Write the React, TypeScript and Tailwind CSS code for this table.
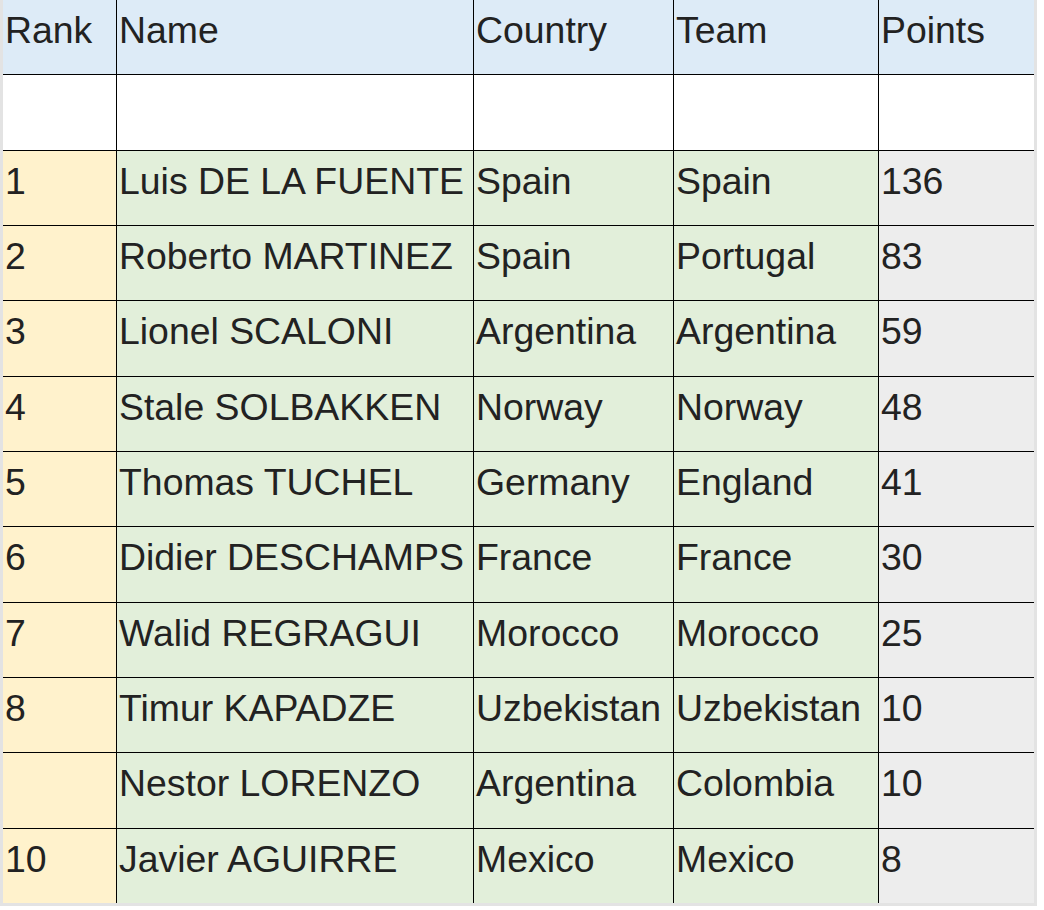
import React from "react";

const rows: [string, string, string, string, string][] = [
  ["1", "Luis DE LA FUENTE", "Spain", "Spain", "136"],
  ["2", "Roberto MARTINEZ", "Spain", "Portugal", "83"],
  ["3", "Lionel SCALONI", "Argentina", "Argentina", "59"],
  ["4", "Stale SOLBAKKEN", "Norway", "Norway", "48"],
  ["5", "Thomas TUCHEL", "Germany", "England", "41"],
  ["6", "Didier DESCHAMPS", "France", "France", "30"],
  ["7", "Walid REGRAGUI", "Morocco", "Morocco", "25"],
  ["8", "Timur KAPADZE", "Uzbekistan", "Uzbekistan", "10"],
  ["", "Nestor LORENZO", "Argentina", "Colombia", "10"],
  ["10", "Javier AGUIRRE", "Mexico", "Mexico", "8"],
];

const cell = "pl-[2px] pt-[9px] overflow-hidden whitespace-nowrap";

export default function App() {
  return (
    <div className="w-[1044px] h-[910px] bg-white">
      <div
        className="w-[1037px] border-l-[3px] border-r-[3px] border-b-[3px] border-[#e3e3e3] text-[37.4px] leading-[1.15] text-[#222]"
        style={{ fontFamily: '"Liberation Sans", Arial, sans-serif' }}
      >
        <div className="grid h-[903px] grid-cols-[113px_356px_199px_204px_155px] grid-rows-[repeat(12,1fr)] gap-px bg-black">
          {["Rank", "Name", "Country", "Team", "Points"].map((h) => (
            <div key={h} className={`${cell} bg-[#ddebf7]`}>
              {h}
            </div>
          ))}
          {[0, 1, 2, 3, 4].map((i) => (
            <div key={"e" + i} className="bg-white" />
          ))}
          {rows.map((r, i) => (
            <React.Fragment key={i}>
              <div className={`${cell} bg-[#fff2cc]`}>{r[0]}</div>
              <div className={`${cell} bg-[#e2efda]`}>{r[1]}</div>
              <div className={`${cell} bg-[#e2efda]`}>{r[2]}</div>
              <div className={`${cell} bg-[#e2efda]`}>{r[3]}</div>
              <div className={`${cell} bg-[#ededed]`}>{r[4]}</div>
            </React.Fragment>
          ))}
        </div>
      </div>
    </div>
  );
}
